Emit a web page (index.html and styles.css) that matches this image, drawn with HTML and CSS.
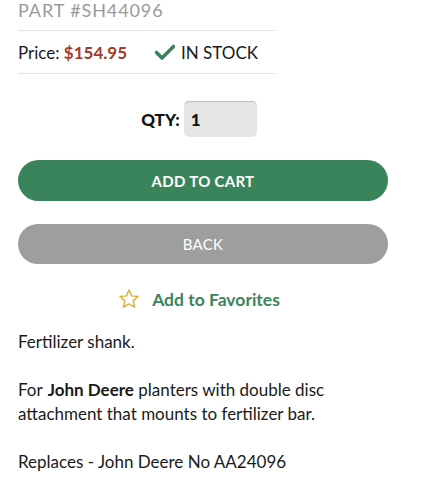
FILE: index.html
```html
<!DOCTYPE html>
<html lang="en">
<head>
<meta charset="utf-8">
<title>Fertilizer shank</title>
<link rel="stylesheet" href="styles.css">
</head>
<body>
<div class="page">
  <div class="info">
    <div class="part">PART #SH44096</div>
    <div class="price-row">
      <span class="price-label">Price: <strong class="price">$154.95</strong></span>
      <span class="stock">
        <svg class="check" viewBox="0 0 20 16" width="20" height="16" aria-hidden="true">
          <path d="M1.5 8.5 L7 14 L18.5 2.5" fill="none" stroke="#3a845c" stroke-width="3.6" stroke-linecap="round" stroke-linejoin="round"/>
        </svg>
        <span>IN STOCK</span>
      </span>
    </div>
  </div>

  <div class="qty-row">
    <label class="qty-label" for="qty">QTY:</label>
    <input class="qty-input" id="qty" type="text" value="1">
  </div>

  <button class="btn btn-cart" type="button">ADD TO CART</button>
  <button class="btn btn-back" type="button">BACK</button>

  <div class="fav-row">
    <svg class="star" viewBox="0 0 24 24" width="22" height="22" aria-hidden="true">
      <path d="M12 2.2 L14.9 8.6 L21.8 9.3 L16.6 14 L18.1 20.9 L12 17.4 L5.9 20.9 L7.4 14 L2.2 9.3 L9.1 8.6 Z" fill="none" stroke="#d9b23a" stroke-width="1.6" stroke-linejoin="round"/>
    </svg>
    <span class="fav-text">Add to Favorites</span>
  </div>

  <div class="desc">
    <p>Fertilizer shank.</p>
    <p>For <strong class="brand">John Deere</strong> planters with double disc attachment that mounts to fertilizer bar.</p>
    <p>Replaces - John Deere No AA24096</p>
  </div>
</div>
</body>
</html>
```

FILE: styles.css
```css
* { box-sizing: border-box; }

html, body {
  margin: 0;
  padding: 0;
  background: #ffffff;
}

body {
  font-family: "Lato", "Open Sans", sans-serif;
  color: #1a1a1a;
  font-size: 17px;
}

.page {
  padding: 0 37px 0 18px;
}

.info {
  width: 257px;
}

.part {
  color: #9a9a9a;
  font-size: 18px;
  letter-spacing: 0.9px;
  line-height: 20px;
  padding-bottom: 10px;
  border-bottom: 1px solid #e2e2e2;
}

.price-row {
  display: flex;
  align-items: center;
  height: 43px;
  border-bottom: 1px solid #e2e2e2;
}

.price-label {
  color: #1a1a1a;
  width: 137px;
}

.price {
  color: #a33a28;
  font-weight: 700;
}

.stock {
  display: flex;
  align-items: center;
  gap: 6px;
  color: #1a1a1a;
}

.check { display: block; }

.qty-row {
  display: flex;
  justify-content: center;
  align-items: center;
  gap: 4px;
  margin-top: 27px;
  padding-right: 8px;
}

.qty-label {
  font-weight: 900;
  font-size: 17px;
  color: #111;
}

.qty-input {
  width: 73px;
  height: 36px;
  border: none;
  border-radius: 5px;
  background: #e6e6e6;
  box-shadow: inset 0 2px 1px -1px #bdbdbd;
  padding: 0 7px;
  font-family: "Lato", sans-serif;
  font-weight: 900;
  font-size: 17px;
  color: #111;
  outline: none;
}

.btn {
  display: block;
  width: 100%;
  border: none;
  border-radius: 21px;
  color: #ffffff;
  font-family: "Lato", "Open Sans", sans-serif;
  font-size: 15px;
  letter-spacing: 0.3px;
  cursor: pointer;
}

.btn-cart {
  margin-top: 23px;
  height: 41px;
  background: #3a845c;
  font-weight: 700;
}

.btn-back {
  margin-top: 23px;
  height: 40px;
  background: #9e9e9e;
  font-weight: 400;
}

.fav-row {
  display: flex;
  justify-content: center;
  align-items: center;
  gap: 12px;
  margin-top: 24px;
  padding-right: 8px;
}

.star { display: block; }

.fav-text {
  color: #3a845c;
  font-weight: 700;
  font-size: 17.5px;
}

.desc {
  margin-top: 20px;
  font-size: 17px;
  line-height: 24px;
}

.desc p {
  margin: 0 0 24px 0;
}

.brand {
  font-weight: 700;
  margin-left: 1px;
}
```
